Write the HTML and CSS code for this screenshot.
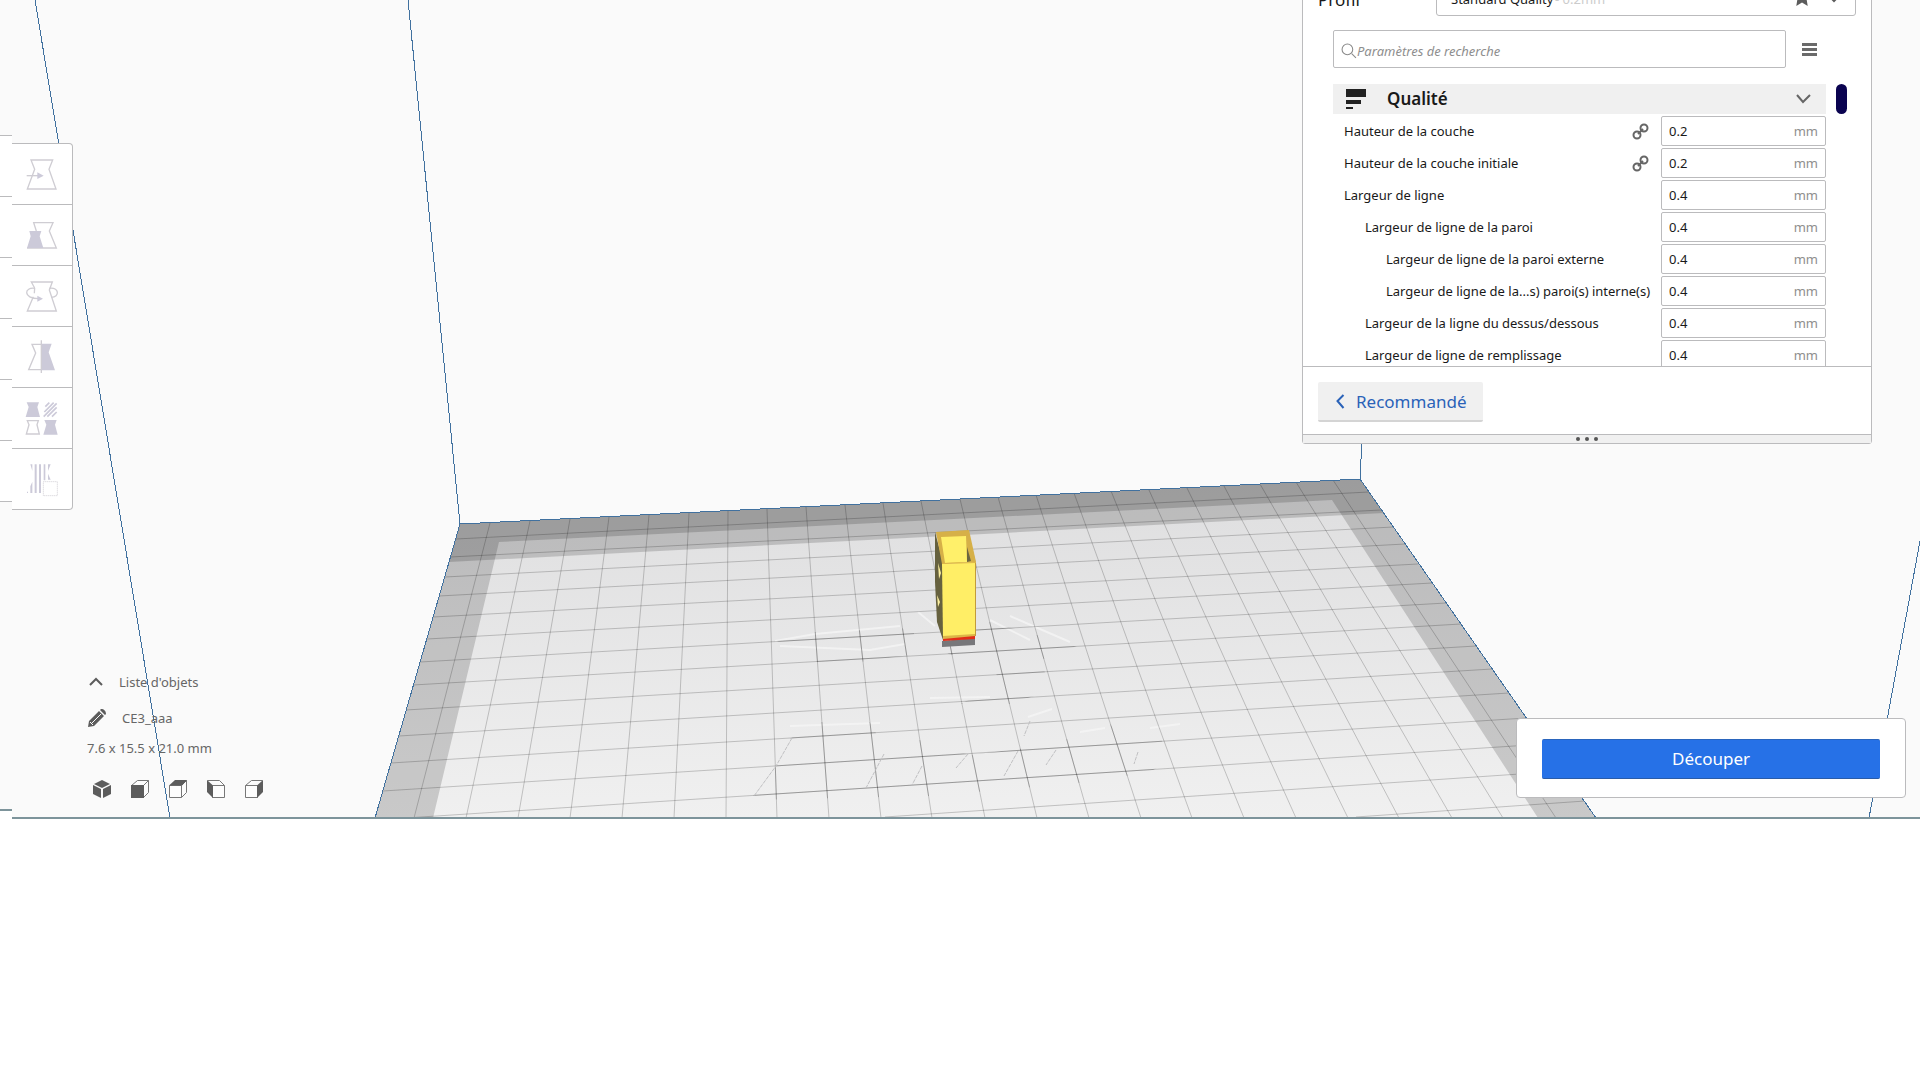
FILE: index.html
```html
<!DOCTYPE html>
<html lang="fr">
<head>
    <meta charset="UTF-8">
    <meta name="viewport" content="width=device-width, initial-scale=1.0">
    <title>CE3_aaa - Ultimaker Cura</title>
    <link rel="stylesheet" href="styles.css">
</head>
<body>
    <main class="viewport">
        <svg class="scene" viewBox="0 0 1920 819" aria-hidden="true">
            <defs>
                <linearGradient id="plate-fill" x1="0" y1="0" x2="0" y2="1">
                    <stop offset="0" stop-color="#dededf"/>
                    <stop offset="1" stop-color="#f0f0f0"/>
                </linearGradient>
                <clipPath id="plate-clip">
                    <path d="M460 524 1360 479 1596 818H375Z"/>
                </clipPath>
                <clipPath id="dark-clip">
                    <path d="M775 640 815 632 915 628 910 655 860 662 818 662ZM930 640 990 622 1055 640 1080 648 1040 660 1052 690 1010 704 960 704 1000 685 990 655 950 655ZM788 740 815 722 870 722 885 750 920 740 970 755 1050 745 1110 724 1125 742 1155 724 1170 760 1150 772 1090 782 930 796 750 800 775 768Z"/>
                </clipPath>
            </defs>
            <rect width="1920" height="819" fill="#fafafa"/>

            <!-- build plate -->
            <g clip-path="url(#plate-clip)">
                <path d="M460 524 1360 479 1596 818H375Z" fill="url(#plate-fill)"/>
                <path class="ghost" d="M775 641 815 634 900 626M780 646 870 650 905 644M918 612 935 626M1010 616 1070 642M990 620 1030 640M790 726 880 723M930 698 990 697M1028 717 1052 709M1080 732 1105 728M1150 728 1180 724"/>
                <g id="grid">
                    <path class="grid" d="M490 523 414 818M530 521 466 818M570 519 518 818M609 517 570 818M649 515 622 818M689 513 674 818M728 511 726 818M767 509 777 818M806 507 829 818M845 505 881 818M883 503 932 818M921 501 985 818M960 499 1037 818M998 497 1089 818M1036 495 1141 818M1074 493 1192 818M1111 491 1244 818M1149 490 1296 818M1187 488 1348 818M1224 486 1399 818M1260 484 1452 818M1296 482 1503 818M1333 480 1556 818"/>
                    <path class="grid" d="M456 539 1369 492M450 557 1381 510M445 577 1393 527M439 596 1405 544M433 617 1418 564M427 639 1432 583M420 662 1446 603M413 685 1461 624M406 710 1476 646M399 736 1492 669M391 763 1509 693M383 791 1526 718M375 820 1545 744M885 817 1564 771M1356 817 1585 801"/>
                </g>
                <use href="#grid" clip-path="url(#dark-clip)"/>
                <path class="scratch" d="M792 738 776 766 754 796M884 754 866 788M922 766 912 785M968 754 956 768M1018 751 1004 776M1030 721 1024 736M1056 750 1046 765M1138 752 1134 764"/>
                <path class="zone" d="M460 524 1360 479 1596 818H1538L1332 500 499 542 433 818H375Z"/>
                <path class="zone" d="M460 524 1360 479 1384 513 449 562Z"/>
            </g>

            <!-- printed object -->
            <path fill="#77777a" d="M942 641 975 638 975 645 942 647Z"/>
            <path fill="#66613f" d="M935 532 943 562 943 640 937 622 935 582Z"/>
            <path fill="#fdf0a0" d="M938 563 941 573 939 579ZM937 595 940 602 938 607Z"/>
            <path fill="#d6b048" d="M936 532 969 530 976 562 942 564Z"/>
            <path fill="#fff06a" d="M941 537 966 536 967 562 945 563Z"/>
            <path fill="#6b6540" d="M967 547 971 561 967 562Z"/>
            <path fill="#ffee66" d="M942 564 976 562 975 636 943 638Z"/>
            <path fill="#dcb548" d="M942 563 976 562V563L942 564ZM943 636 975 634V637L943 640Z"/>
            <path fill="#e22c17" d="M943 639 975 636V639L943 641Z"/>
            <path fill="none" stroke="#c29b3a" stroke-width="1" d="M975.500 563V636"/>

            <!-- build volume edges -->
            <path class="edge" d="M35 0 170 818M408 0 460 524 375 818M460 524 1360 479 1596 818M1362 440 1360 479M1920 541 1869 818"/>

            <rect y="811" width="12" height="8" fill="#fff"/>
            <path fill="#7d949b" d="M12 817H1920V819H12ZM0 809H12V811H0Z"/>
        </svg>

        <div class="toolbar-shadow">
            <i></i><i></i><i></i><i></i><i></i><i></i>
        </div>

        <nav class="toolbar">
            <button type="button" aria-label="Déplacer">
                <svg viewBox="0 0 180 180">
                    <path class="line" d="M57 48H122L111 76 132 135H46L68 76Z"/>
                    <path class="line" d="M44 95H80"/>
                    <path class="solid" d="M76 85 95 95 76 105Z"/>
                </svg>
            </button>
            <button type="button" aria-label="Mettre à l'échelle">
                <svg viewBox="0 0 180 180">
                    <path class="line" d="M73 78 65 53H123L112 78 133 129H45"/>
                    <path class="solid" d="M52 78H88L83 94 94 129H45L56 94Z"/>
                </svg>
            </button>
            <button type="button" aria-label="Tourner">
                <svg viewBox="0 0 180 180">
                    <path class="line" d="M68 66 58 48H121L112 72 133 135H46L64 92"/>
                    <path class="line" d="M69 67C36 62 32 98 80 98M112 67C142 62 144 94 118 94"/>
                    <path class="line" d="M68 66 67 82"/>
                    <path class="solid" d="M76 89 93 98 76 107Z"/>
                </svg>
            </button>
            <button type="button" aria-label="Miroir">
                <svg viewBox="0 0 180 180">
                    <path class="line" d="M88 52H60L71 78 50 128H88"/>
                    <path class="solid" d="M88 50H119L110 76 129 130H88Z"/>
                    <path class="line" d="M88 40V138"/>
                </svg>
            </button>
            <button type="button" aria-label="Paramètres par modèle">
                <svg viewBox="0 0 180 180">
                    <path class="solid" d="M44 43H81L76 57 84 87H41L50 57ZM97 96H134L129 110 137 140H94L103 110Z"/>
                    <path class="line" d="M46 98H79L75 110 82 138H43L51 110Z"/>
                    <path class="hatch" d="M100 56 112 44M97 72 125 44M95 86 134 46M106 86 134 58M120 86 134 72"/>
                </svg>
            </button>
            <button type="button" aria-label="Blocage des supports">
                <svg viewBox="0 0 180 180">
                    <path class="solid" d="M55 46H61V66ZM61 98V132H55V112ZM68 46H74V132H68ZM81 46H87V132H81ZM95 46H100V94H95ZM108 46H116L108 66ZM108 74 116 92H108ZM45 128H48V132H45Z"/>
                    <path class="dots" d="M94 98H136V140H94Z"/>
                </svg>
            </button>
        </nav>

        <section class="object-info">
            <button type="button" class="list-toggle">
                <svg width="14" height="10" viewBox="0 0 14 10"><path d="M1 8 7 2 13 8"/></svg>
                Liste d'objets
            </button>
            <button type="button" class="job-name">
                <svg width="18" height="18" viewBox="0 0 18 18"><path d="M0 18 1 12 11 2 16 7 6 17ZM12 1 13 0C16 0 18 2 18 5L17 6Z"/><path class="gap" d="M2 13 5 16M4 14 13 5"/></svg>
                CE3_aaa
            </button>
            <p class="dimensions">7.6 x 15.5 x 21.0 mm</p>
            <div class="views">
                <button type="button" aria-label="Vue 3D">
                    <svg viewBox="0 0 18 18"><path class="face" d="M9 0 17 4 9 8 1 4ZM0 5 8 9V18L0 14ZM18 5 10 9V18L18 14Z"/></svg>
                </button>
                <button type="button" aria-label="Vue de face">
                    <svg viewBox="0 0 18 18"><path d="M.5 5.500H12.500V17.500H.5ZM.5 5.500 6.500.5H17.500V12.500L12.500 17.500M12.500 5.500 17.500.5"/><path class="face" d="M0 5H13V18H0Z"/></svg>
                </button>
                <button type="button" aria-label="Vue du dessus">
                    <svg viewBox="0 0 18 18"><path d="M.5 5.500H12.500V17.500H.5ZM12.500 5.500 17.500.5V12.500L12.500 17.500"/><path class="face" d="M0 5.500 6 0H18L13 5.500Z"/></svg>
                </button>
                <button type="button" aria-label="Vue gauche">
                    <svg viewBox="0 0 18 18"><path d="M5.500 5.500H17.500V17.500H5.500ZM.5.500H12.500L17.500 5.500"/><path class="face" d="M0 0 6 5.500V18L0 12Z"/></svg>
                </button>
                <button type="button" aria-label="Vue droite">
                    <svg viewBox="0 0 18 18"><path d="M.5 5.500H12.500V17.500H.5ZM.5 5.500 6.500.5H17.500"/><path class="face" d="M12 5.500 18 0V12L12 18Z"/></svg>
                </button>
            </div>
        </section>

        <section class="settings-panel">
            <div class="profile-row">
                <label for="profile">Profil</label>
                <div class="profile-box">
                    <select id="profile">
                        <option>Standard Quality</option>
                    </select>
                    <span class="profile-height">- 0.2mm</span>
                    <svg class="star" width="16" height="16" viewBox="0 0 14 14"><path d="M7 0 9 5H14L11 8 12 14 7 11 2 14 3 8 0 5H5Z"/></svg>
                    <svg class="arrow" width="12" height="8" viewBox="0 0 12 8"><path d="M1 1 6 6 11 1"/></svg>
                </div>
            </div>

            <div class="search-row">
                <div class="search-box">
                    <svg width="16" height="16" viewBox="0 0 15 15"><circle cx="6" cy="6" r="5"/><path d="M10 10 14 14"/></svg>
                    <input type="text" placeholder="Paramètres de recherche" aria-label="Paramètres de recherche">
                </div>
                <button type="button" class="menu-button" aria-label="Visibilité des paramètres">
                    <svg width="15" height="13" viewBox="0 0 15 13"><path d="M0 0H15V3H0ZM0 5H15V8H0ZM0 10H15V13H0Z"/></svg>
                </button>
            </div>

            <div class="settings-scroll">
                <div class="settings-list">
                    <button type="button" class="category">
                        <svg width="20" height="20" viewBox="0 0 20 20"><path d="M0 0H20V8H0ZM0 11H15V15H0ZM0 18H7V20H0Z"/></svg>
                        <span>Qualité</span>
                        <svg class="chevron" width="15" height="10" viewBox="0 0 15 10"><path d="M1 1 7 8 14 1"/></svg>
                    </button>
                    <div class="setting">
                        <label for="s1">Hauteur de la couche</label>
                        <svg class="link" width="17" height="17" viewBox="0 0 17 17"><circle cx="12" cy="5" r="3.500"/><circle cx="5" cy="12" r="3.500"/><path d="M6 11 11 6"/></svg>
                        <div class="field"><input id="s1" type="text" value="0.2"><span>mm</span></div>
                    </div>
                    <div class="setting">
                        <label for="s2">Hauteur de la couche initiale</label>
                        <svg class="link" width="17" height="17" viewBox="0 0 17 17"><circle cx="12" cy="5" r="3.500"/><circle cx="5" cy="12" r="3.500"/><path d="M6 11 11 6"/></svg>
                        <div class="field"><input id="s2" type="text" value="0.2"><span>mm</span></div>
                    </div>
                    <div class="setting">
                        <label for="s3">Largeur de ligne</label>
                        <div class="field"><input id="s3" type="text" value="0.4"><span>mm</span></div>
                    </div>
                    <div class="setting level-1">
                        <label for="s4">Largeur de ligne de la paroi</label>
                        <div class="field"><input id="s4" type="text" value="0.4"><span>mm</span></div>
                    </div>
                    <div class="setting level-2">
                        <label for="s5">Largeur de ligne de la paroi externe</label>
                        <div class="field"><input id="s5" type="text" value="0.4"><span>mm</span></div>
                    </div>
                    <div class="setting level-2">
                        <label for="s6">Largeur de ligne de la...s) paroi(s) interne(s)</label>
                        <div class="field"><input id="s6" type="text" value="0.4"><span>mm</span></div>
                    </div>
                    <div class="setting level-1">
                        <label for="s7">Largeur de la ligne du dessus/dessous</label>
                        <div class="field"><input id="s7" type="text" value="0.4"><span>mm</span></div>
                    </div>
                    <div class="setting level-1">
                        <label for="s8">Largeur de ligne de remplissage</label>
                        <div class="field"><input id="s8" type="text" value="0.4"><span>mm</span></div>
                    </div>
                </div>
                <div class="scroll-thumb"></div>
            </div>

            <div class="panel-footer">
                <button type="button" class="recommended">
                    <svg width="10" height="15" viewBox="0 0 9 15"><path d="M8 1 2 7 8 14"/></svg>
                    Recommandé
                </button>
            </div>
            <div class="resize-handle"><i></i><i></i><i></i></div>
        </section>

        <section class="slice-card">
            <button type="button">Découper</button>
        </section>
    </main>
</body>
</html>
```
FILE: styles.css
```css
* {
    box-sizing: border-box;
}
body {
    margin: 0;
    background: #fff;
    color: #191919;
    font-family: "Noto Sans", "Open Sans", sans-serif;
    font-size: 13px;
    line-height: 20px;
    overflow-x: hidden;
}
button,
input,
select {
    font: inherit;
    color: inherit;
    margin: 0;
    padding: 0;
    border: none;
    background: none;
}
button {
    cursor: pointer;
}
svg {
    display: block;
    flex: none;
}
.viewport {
    position: relative;
    overflow: hidden;
}

/* 3D scene */
.scene {
    width: 100%;
    height: auto;
}
.grid {
    fill: none;
    stroke: #000;
    stroke-opacity: 0.2;
    stroke-width: 1;
}
.scratch {
    fill: none;
    stroke: #c0c0c2;
    stroke-width: 1;
    stroke-dasharray: 4 1;
}
.ghost {
    fill: none;
    stroke: #f6f6f6;
    stroke-width: 2;
    opacity: 0.7;
}
.zone {
    fill: #000;
    fill-opacity: 0.16;
}
.edge {
    fill: none;
    stroke: #41719f;
    stroke-width: 1;
    shape-rendering: crispEdges;
}

/* left toolbar */
.toolbar-shadow {
    position: absolute;
    top: 135px;
    left: 0;
    width: 12px;
    border-top: 1px solid #bbbbbd;
}
.toolbar-shadow i {
    display: block;
    height: 61px;
    background: #fff;
    border-bottom: 1px solid #bbbbbd;
}
.toolbar {
    position: absolute;
    top: 143px;
    left: 12px;
    width: 61px;
    background: #fff;
    border: 1px solid #bbbbbd;
    border-left: none;
    border-radius: 0 4px 4px 0;
}
.toolbar button {
    display: block;
    width: 60px;
    height: 61px;
    border-bottom: 1px solid #bbbbbd;
}
.toolbar button:last-child {
    height: 60px;
    border-bottom: none;
}
.toolbar svg {
    width: 60px;
    height: 60px;
}
.toolbar .line {
    fill: none;
    stroke: #cfcdd3;
    stroke-width: 4;
}
.toolbar .solid {
    fill: #cccad9;
}
.toolbar .hatch {
    fill: none;
    stroke: #cccad9;
    stroke-width: 5;
}
.toolbar .dots {
    fill: none;
    stroke: #cfcdd3;
    stroke-width: 3;
    stroke-dasharray: 3 3;
}

/* object list */
.object-info {
    position: absolute;
    left: 87px;
    bottom: 21px;
    color: #666;
}
.list-toggle,
.job-name {
    display: flex;
    align-items: center;
}
.list-toggle {
    gap: 16px;
    padding-left: 2px;
    margin-bottom: 16px;
}
.list-toggle svg {
    fill: none;
    stroke: #5c5c5c;
    stroke-width: 2;
}
.job-name {
    gap: 16px;
    padding-left: 1px;
    margin-bottom: 10px;
}
.job-name svg {
    fill: #5c5c5c;
}
.job-name .gap {
    fill: none;
    stroke: #fafafa;
    stroke-width: 1;
}
.dimensions {
    margin: 0 0 22px;
}
.views {
    display: flex;
    gap: 20px;
    padding-left: 6px;
}
.views svg {
    width: 18px;
    height: 18px;
    fill: #fdfdfd;
    stroke: #777;
    stroke-width: 1;
}
.views .face {
    fill: #5c5c5c;
    stroke: none;
}

/* print settings */
.settings-panel {
    position: absolute;
    top: -30px;
    right: 48px;
    width: 570px;
    background: #fff;
    border: 1px solid #bbbbbd;
    border-radius: 3px;
}
.profile-row {
    display: flex;
    align-items: center;
    padding: 11px 15px 0;
}
.profile-row label {
    width: 118px;
    padding-top: 2px;
    font-size: 17px;
}
.profile-box {
    position: relative;
    flex: 1;
}
.profile-box select {
    display: block;
    width: 100%;
    height: 34px;
    padding: 0 14px;
    border: 1px solid #bbbbbd;
    border-radius: 3px;
    appearance: none;
}
.profile-height {
    position: absolute;
    top: 7px;
    left: 119px;
    color: #ccc;
}
.star {
    position: absolute;
    top: 8px;
    right: 46px;
    fill: #5c5c5c;
}
.arrow {
    position: absolute;
    top: 13px;
    right: 16px;
    fill: none;
    stroke: #5c5c5c;
    stroke-width: 2;
}
.search-row {
    display: flex;
    align-items: center;
    padding: 14px 54px 0 30px;
}
.search-box {
    flex: 1;
    display: flex;
    align-items: center;
    height: 38px;
    padding: 3px 7px 0;
    border: 1px solid #bbbbbd;
    border-radius: 2px;
}
.search-box svg {
    fill: none;
    stroke: #8a8a8a;
    stroke-width: 1;
}
.search-box input {
    flex: 1;
    outline: none;
    font-style: italic;
}
.search-box input::placeholder {
    color: #8e8e8e;
    opacity: 1;
}
.menu-button {
    margin-left: 16px;
}
.menu-button svg {
    fill: #6a6a6a;
}
.settings-scroll {
    display: flex;
    gap: 10px;
    max-height: 282px;
    margin-top: 16px;
    padding: 0 24px 0 30px;
    overflow: hidden;
}
.settings-list {
    flex: 1;
}
.category {
    display: flex;
    align-items: center;
    width: 100%;
    height: 30px;
    margin-bottom: 2px;
    padding: 0 15px 0 13px;
    background: #f0f0f0;
    font-size: 17px;
    font-weight: 600;
    text-align: left;
}
.category span {
    flex: 1;
    padding-left: 21px;
}
.category svg {
    fill: #222;
}
.category .chevron {
    fill: none;
    stroke: #666;
    stroke-width: 2;
}
.setting {
    display: flex;
    align-items: center;
    height: 30px;
    margin-bottom: 2px;
    padding-left: 11px;
    white-space: nowrap;
}
.setting label {
    flex: 1;
}
.level-1 {
    padding-left: 32px;
}
.level-2 {
    padding-left: 53px;
}
.link {
    margin-right: 12px;
    fill: none;
    stroke: #666;
    stroke-width: 2;
}
.field {
    display: flex;
    align-items: center;
    width: 165px;
    height: 30px;
    padding: 0 7px;
    border: 1px solid #bbbbbd;
    border-radius: 2px;
}
.field input {
    flex: 1;
    min-width: 0;
    outline: none;
}
.field span {
    color: #8e8e8e;
}
.scroll-thumb {
    width: 11px;
    height: 30px;
    border-radius: 6px;
    background: #0a0350;
}
.panel-footer {
    padding: 15px;
    border-top: 1px solid #bbbbbd;
}
.recommended {
    display: flex;
    align-items: center;
    gap: 11px;
    height: 40px;
    margin-bottom: -3px;
    padding: 1px 17px 0;
    background: #f0f0f0;
    border-bottom: 2px solid #d4d4d4;
    border-radius: 2px;
    color: #2a62b8;
    font-size: 17px;
}
.recommended svg {
    fill: none;
    stroke: #2a62b8;
    stroke-width: 2;
}
.resize-handle {
    display: flex;
    align-items: center;
    justify-content: center;
    gap: 5px;
    height: 9px;
    border-top: 1px solid #bbbbbd;
    background: #f0f0f0;
}
.resize-handle i {
    width: 4px;
    height: 4px;
    border-radius: 50%;
    background: #555;
}

/* slice button */
.slice-card {
    position: absolute;
    right: 14px;
    bottom: 21px;
    width: 390px;
    padding: 20px 25px 18px;
    background: #fff;
    border: 1px solid #bbbbbd;
    border-radius: 4px;
}
.slice-card button {
    display: block;
    width: 100%;
    height: 40px;
    background: #2671e7;
    border-top: 1px solid #2a65bd;
    border-bottom: 1px solid #2a5ca8;
    border-radius: 2px;
    color: #fff;
    font-size: 17px;
}
```
